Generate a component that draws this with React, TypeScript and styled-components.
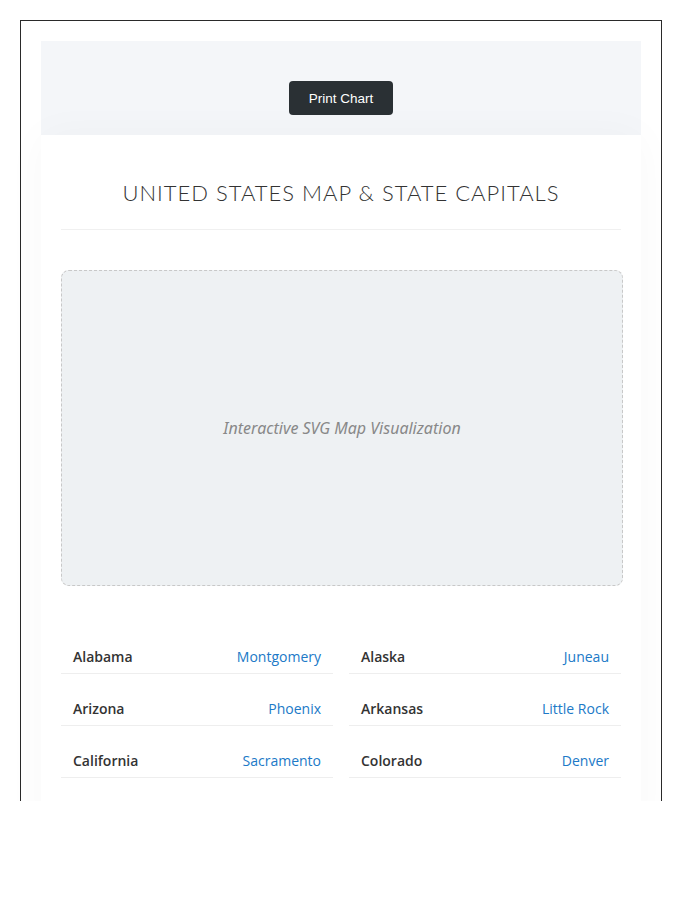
import React from "react";
import styled, { createGlobalStyle } from "styled-components";

const Global = createGlobalStyle`
  html, body { margin: 0; padding: 0; background: #fff; }
  body { font-family: "Open Sans", "Noto Sans", sans-serif; color: #333; }
  * { box-sizing: border-box; }
`;

const Viewport = styled.div`
  height: 801px;
  overflow: hidden;
  padding: 20px 0 0 20px;
`;

const Frame = styled.div`
  width: 642px;
  border: 1px solid #2a2a2a;
  padding: 20px;
  background: #fff;
`;

const Toolbar = styled.div`
  background: #f4f6f9;
  display: flex;
  justify-content: center;
  padding: 40px 0 20px;
`;

const PrintButton = styled.button`
  width: 104px;
  height: 34px;
  border: none;
  border-radius: 4px;
  background: #2a3034;
  color: #fff;
  font-family: "Liberation Sans", Arial, sans-serif;
  font-size: 13.5px;
  cursor: pointer;
`;

const Card = styled.div`
  background: #fff;
  padding: 20px 20px 60px;
  box-shadow: 0 0 40px rgba(0, 0, 0, 0.03);
`;

const Title = styled.h1`
  margin: 22px 0 0;
  padding-bottom: 20px;
  border-bottom: 1px solid #f0f0f0;
  text-align: center;
  font-family: Lato, "Open Sans", sans-serif;
  font-weight: 300;
  font-size: 22px;
  line-height: 32px;
  letter-spacing: 1px;
  color: #333;
`;

const MapBox = styled.div`
  margin: 40px -2px 0 0;
  height: 316px;
  border: 1px dashed #c8c8c8;
  border-radius: 8px;
  background: #eef1f3;
  display: flex;
  align-items: center;
  justify-content: center;
`;

const MapLabel = styled.span`
  font-family: "Noto Sans", "Open Sans", sans-serif;
  font-style: italic;
  font-size: 16px;
  color: #888;
`;

const StateGrid = styled.div`
  margin-top: 53px;
  display: grid;
  grid-template-columns: 1fr 1fr;
  column-gap: 16px;
  row-gap: 17px;
`;

const StateRow = styled.div`
  display: flex;
  justify-content: space-between;
  align-items: center;
  padding: 8px 12px 6px;
  line-height: 20px;
  font-size: 14px;
  border-bottom: 1px solid #eeeeee;
`;

const StateName = styled.span`
  font-weight: 600;
  color: #333;
`;

const Capital = styled.span`
  color: #2079c7;
`;

const states: [string, string][] = [
  ["Alabama", "Montgomery"],
  ["Alaska", "Juneau"],
  ["Arizona", "Phoenix"],
  ["Arkansas", "Little Rock"],
  ["California", "Sacramento"],
  ["Colorado", "Denver"],
];

export default function App() {
  return (
    <>
      <Global />
      <Viewport>
        <Frame>
          <Toolbar>
            <PrintButton>Print Chart</PrintButton>
          </Toolbar>
          <Card>
            <Title>UNITED STATES MAP &amp; STATE CAPITALS</Title>
            <MapBox>
              <MapLabel>Interactive SVG Map Visualization</MapLabel>
            </MapBox>
            <StateGrid>
              {states.map(([s, c]) => (
                <StateRow key={s}>
                  <StateName>{s}</StateName>
                  <Capital>{c}</Capital>
                </StateRow>
              ))}
            </StateGrid>
          </Card>
        </Frame>
      </Viewport>
    </>
  );
}
